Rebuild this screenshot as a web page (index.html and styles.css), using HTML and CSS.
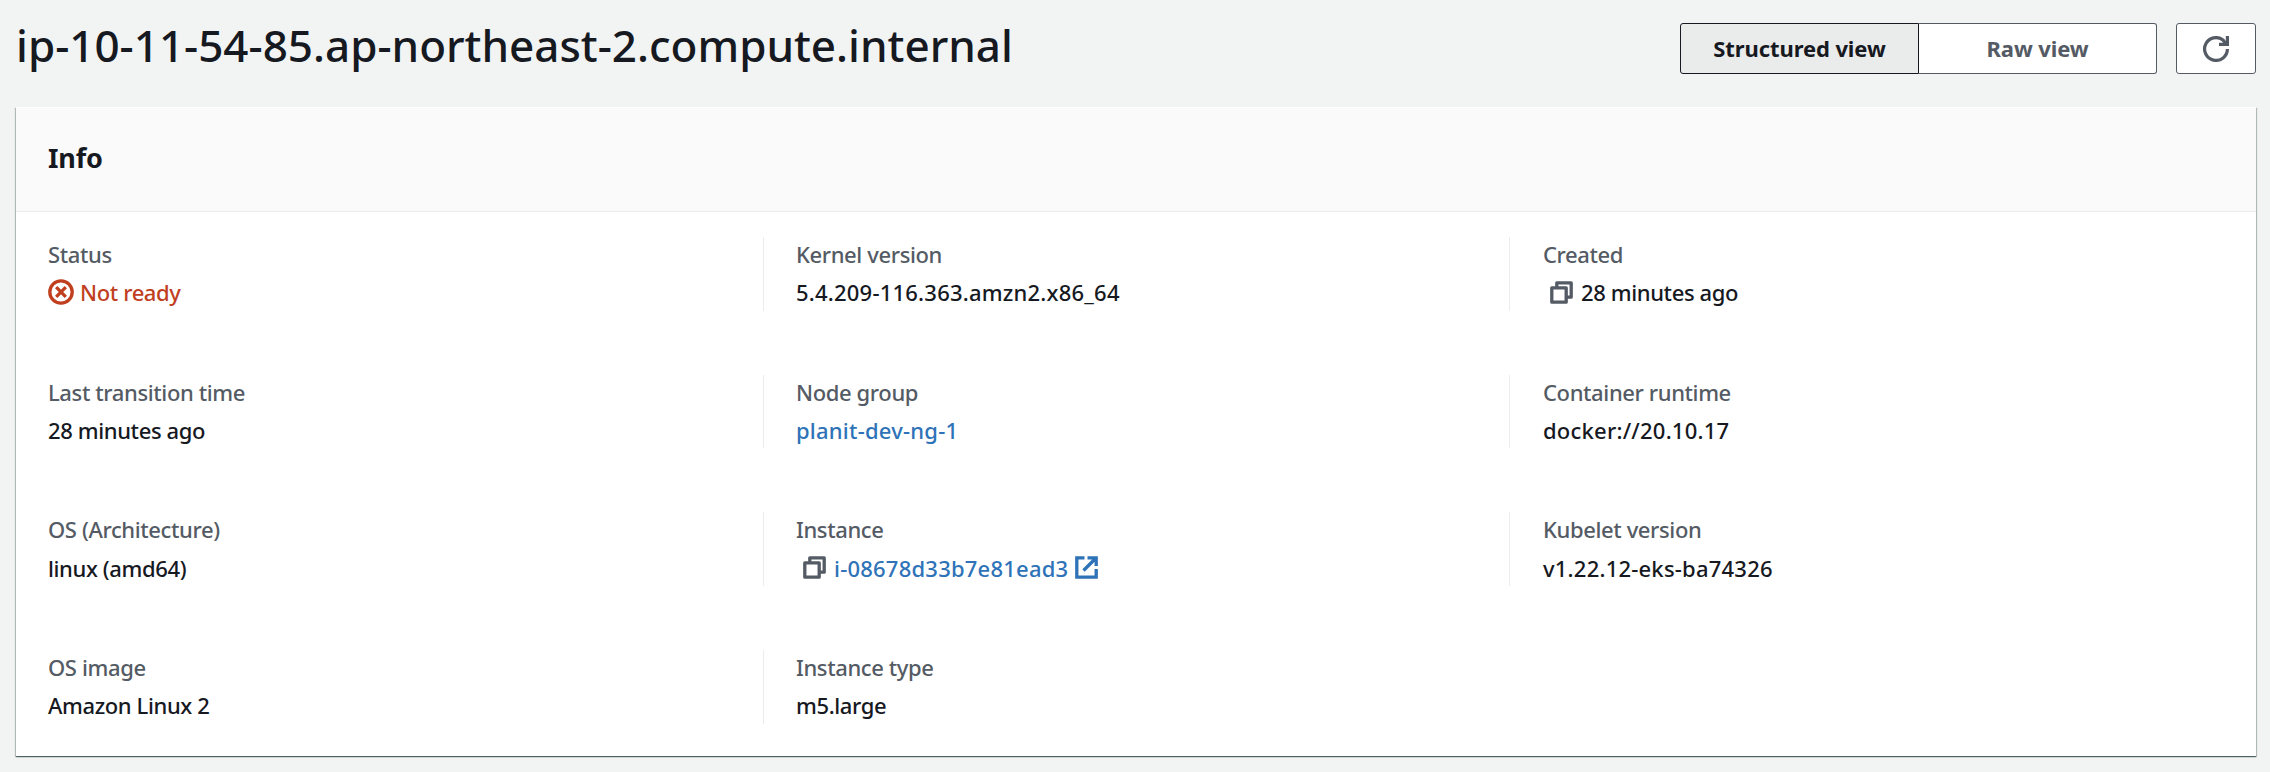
FILE: index.html
```html
<!DOCTYPE html>
<html lang="en">
<head>
<meta charset="utf-8">
<title>Node details</title>
<link rel="stylesheet" href="styles.css">
</head>
<body>
<header class="page-header">
  <h1 class="title">ip-10-11-54-85.ap-northeast-2.compute.internal</h1>
  <div class="actions">
    <div class="segmented">
      <button class="segment selected">Structured view</button>
      <button class="segment">Raw view</button>
    </div>
    <button class="refresh" aria-label="Refresh">
      <svg class="refresh-icon" viewBox="0 0 26 26" fill="none" stroke="currentColor" stroke-width="3.2"><path d="M24.400 13A11.400 11.400 0 1 1 20 4L23 8"/><path d="M24.400 0v8.400H16"/></svg>
    </button>
  </div>
</header>
<main class="card">
  <div class="card-header"><h2 class="card-title">Info</h2></div>
  <div class="grid">
    <div class="cell first"><div class="label">Status</div><div class="value error"><svg class="status-icon" viewBox="0 0 26 26" fill="none" stroke="currentColor" stroke-width="3.300"><circle cx="13" cy="13" r="11.200"/><path d="M8.200 8.200l9.600 9.600M17.800 8.200l-9.600 9.600"/></svg>Not ready</div></div>
    <div class="cell"><div class="label">Kernel version</div><div class="value code">5.4.209-116.363.amzn2.x86_64</div></div>
    <div class="cell third"><div class="label">Created</div><div class="value"><svg class="copy-icon" viewBox="0 0 23 23" fill="none" stroke="currentColor" stroke-width="3.300" stroke-linejoin="round"><path d="M1.800 6.800h14.400v14.400H1.800zM6.800 6.800V1.800h14.400v14.400h-5"/></svg>28 minutes ago</div></div>

    <div class="cell first"><div class="label">Last transition time</div><div class="value">28 minutes ago</div></div>
    <div class="cell"><div class="label">Node group</div><div class="value code"><a class="link">planit-dev-ng-1</a></div></div>
    <div class="cell third"><div class="label">Container runtime</div><div class="value code">docker://20.10.17</div></div>

    <div class="cell first"><div class="label">OS (Architecture)</div><div class="value">linux (amd64)</div></div>
    <div class="cell"><div class="label">Instance</div><div class="value code"><svg class="copy-icon" viewBox="0 0 23 23" fill="none" stroke="currentColor" stroke-width="3.300" stroke-linejoin="round"><path d="M1.800 6.800h14.400v14.400H1.800zM6.800 6.800V1.800h14.400v14.400h-5"/></svg><a class="link">i-08678d33b7e81ead3</a><svg class="external-icon" viewBox="0 0 23 23" fill="none" stroke="currentColor" stroke-width="3.300"><path d="M9.500 1.800H1.800v19.400h19.400V13M12.500 1.800h8.700V10M20.500 2.500L8.500 14.500"/></svg></div></div>
    <div class="cell third"><div class="label">Kubelet version</div><div class="value code">v1.22.12-eks-ba74326</div></div>

    <div class="cell first"><div class="label">OS image</div><div class="value">Amazon Linux 2</div></div>
    <div class="cell"><div class="label">Instance type</div><div class="value">m5.large</div></div>
  </div>
</main>
</body>
</html>
```
FILE: styles.css
```css
* { box-sizing: border-box; }

body {
  margin: 0;
  padding: 23px 14px 0 16px;
  height: 772px;
  overflow: hidden;
  background: #f2f3f3;
  color: #16191f;
  font: 500 22px/30px "Noto Sans", "Open Sans", sans-serif;
}

.page-header {
  display: flex;
  justify-content: space-between;
  height: 84px;
}

.title {
  margin: 0;
  font-size: 44px;
  font-weight: 500;
  line-height: 44px;
}

.actions { display: flex; gap: 19px; }

.segmented { display: flex; }

.segment,
.refresh {
  height: 51px;
  border: 1px solid #545b64;
  background: #fff;
  color: #545b64;
  font: 700 22px/30px "Noto Sans", "Open Sans", sans-serif;
  padding: 0 0 2px;
}

.segment {
  width: 238px;
  letter-spacing: -0.1px;
  border-left: 0;
  border-radius: 0 3px 3px 0;
}

.segment.selected {
  width: 239px;
  border: 1px solid #16191f;
  border-radius: 3px 0 0 3px;
  background: #eaebeb;
  color: #16191f;
}

.refresh {
  display: flex;
  align-items: center;
  justify-content: center;
  width: 80px;
  padding: 0;
  border-radius: 3px;
}

.refresh-icon { width: 26px; height: 26px; }

.card {
  width: 2240px;
  height: 649px;
  border-top: 1px solid #fff;
  background: #fff;
  box-shadow: 0 1px 1px 0 rgba(0, 28, 36, 0.5), 1px 1px 1px 0 rgba(0, 28, 36, 0.2), -1px 1px 1px 0 rgba(0, 28, 36, 0.2);
}

.card-header {
  display: flex;
  align-items: center;
  height: 104px;
  padding: 0 32px 4px;
  border-bottom: 1px solid #eaeded;
  background: #fafafa;
}

.card-title {
  margin: 0;
  font-size: 27px;
  font-weight: 700;
  letter-spacing: -0.2px;
}

.grid {
  display: grid;
  grid-template-columns: 747px 746px 1fr;
  grid-auto-rows: 73.7px;
  row-gap: 64px;
  padding-top: 25px;
}

.cell {
  padding: 2px 0 0 32px;
  border-left: 1px solid #eaeded;
}

.cell.first {
  border-left: 0;
  padding-left: 32px;
}

.cell.third { padding-left: 33px; }

.label,
.value {
  display: flex;
  align-items: center;
  letter-spacing: -0.38px;
}

.label { color: #545b64; }
.value { height: 30px; margin-top: 8.2px; }
.value.code { letter-spacing: 0.22px; }
.value.error { color: #c03f1f; }
.link { color: #2e73b8; }

.status-icon { width: 26px; height: 26px; margin-right: 6px; }
.copy-icon { width: 23px; height: 23px; margin: 0 8px 0 7px; color: #545b64; }
.external-icon { width: 23px; height: 23px; margin-left: 7px; color: #2e73b8; }
```
